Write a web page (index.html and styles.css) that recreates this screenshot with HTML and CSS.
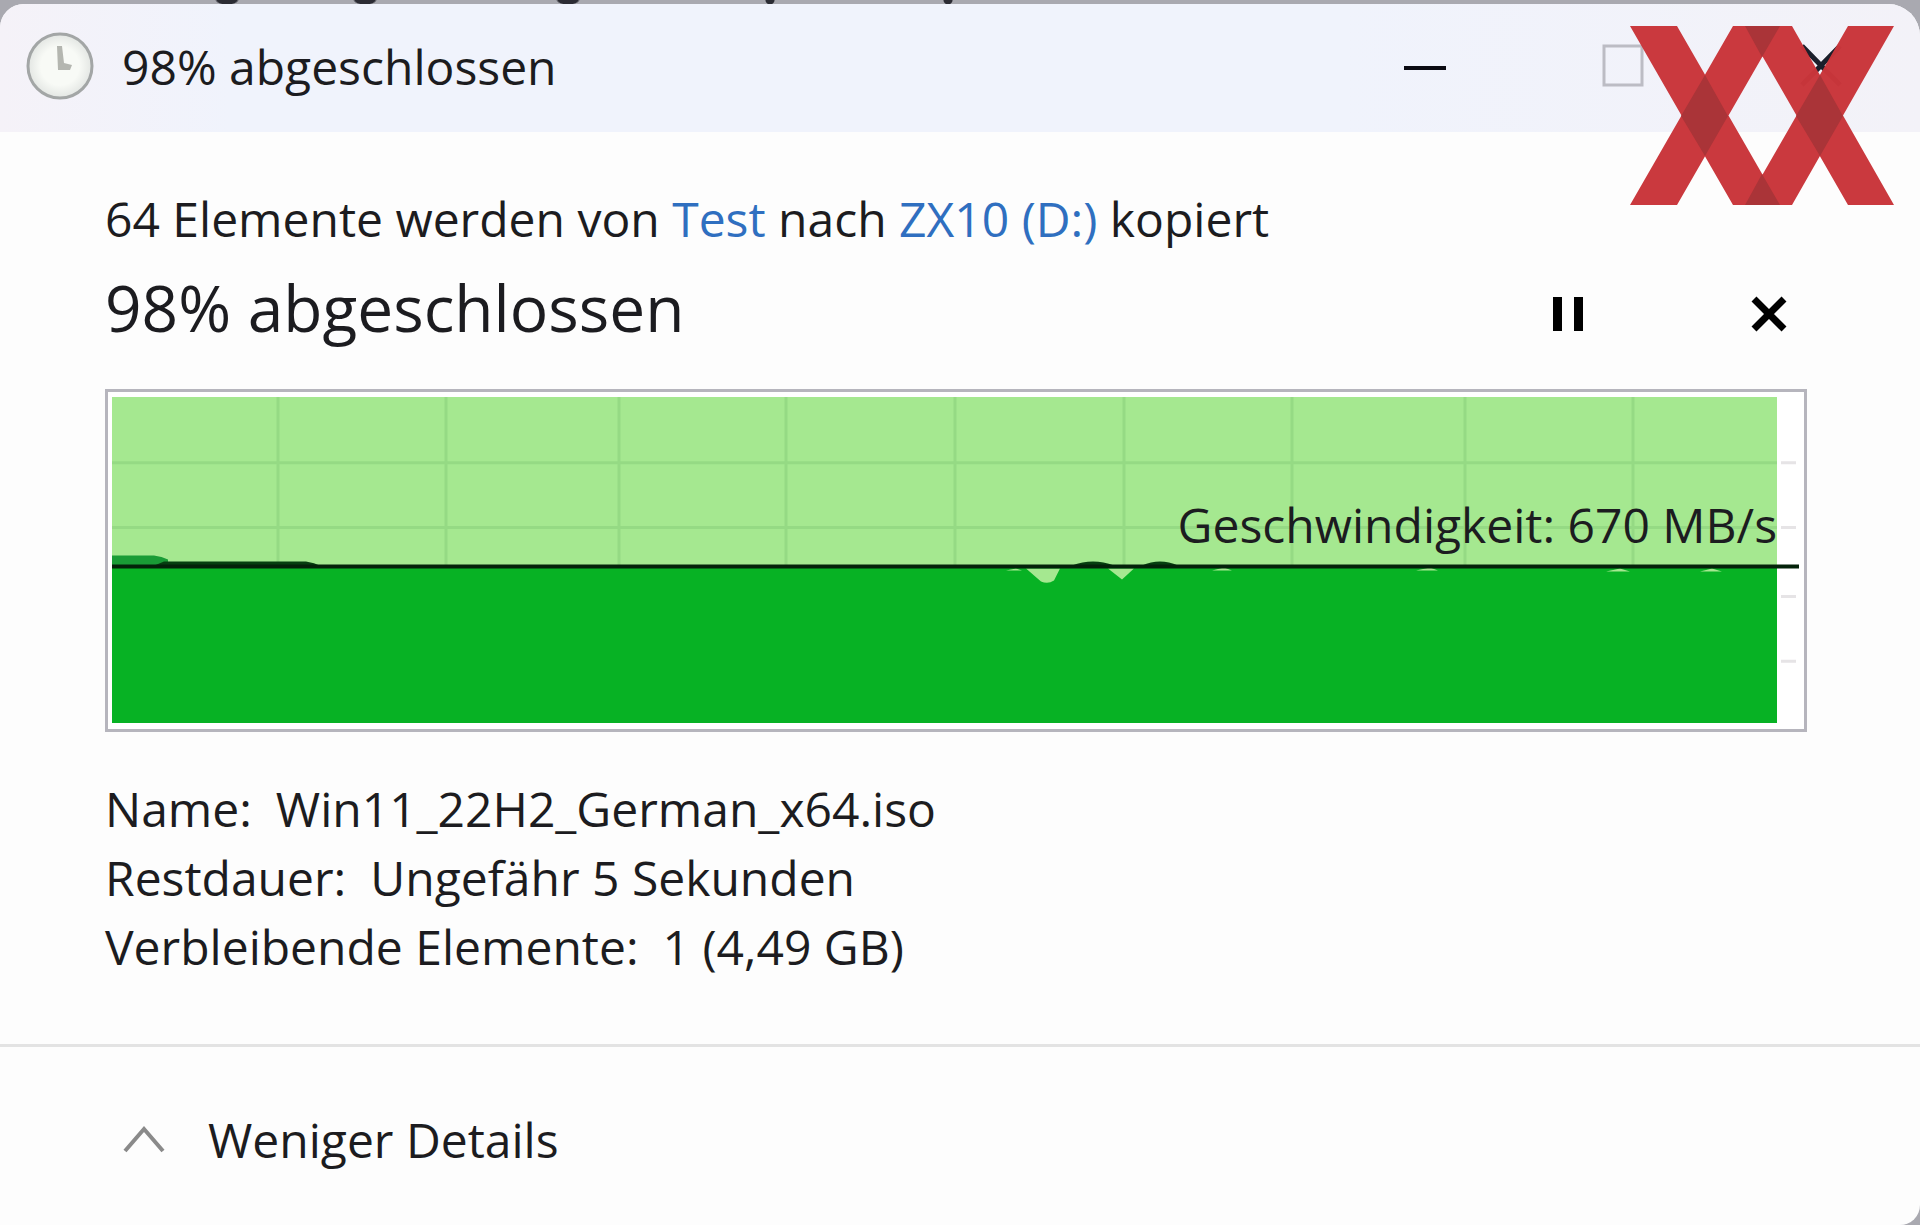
FILE: index.html
```html
<!DOCTYPE html>
<html lang="de">
  <head>
    <meta charset="UTF-8" />
    <title>98% abgeschlossen</title>
    <link rel="stylesheet" href="styles.css">
  </head>

  <body>
    <div class="window">
      <header class="titlebar">
        <svg class="titlebar__clock" viewBox="0 0 68 68" aria-hidden="true">
          <defs>
            <radialGradient id="face">
              <stop offset="0.6" stop-color="#f8faf6" />
              <stop offset="1" stop-color="#e3e6e3" />
            </radialGradient>
          </defs>
          <circle cx="34" cy="34" r="32" fill="url(#face)" stroke="#a3a6a6" stroke-width="3" />
          <path d="M31 14h5l2 17 8 2-2 5H32z" fill="#b4b6b0" />
        </svg>
        <h1 class="titlebar__title">98% abgeschlossen</h1>
        <div class="titlebar__controls">
          <button class="titlebar__btn" aria-label="Minimieren">
            <svg viewBox="0 0 44 44"><path d="M1 24h42" stroke="#0b0b12" stroke-width="4" /></svg>
          </button>
          <button class="titlebar__btn" aria-label="Maximieren" disabled>
            <svg viewBox="0 0 44 44"><path d="M3 2h38v39H3z" fill="none" stroke="#bcbcc4" stroke-width="3" /></svg>
          </button>
          <button class="titlebar__btn" aria-label="Schließen">
            <svg viewBox="0 0 44 44"><path d="M3 2l38 39M41 2L3 41" stroke="#1b1f2b" stroke-width="5" /></svg>
          </button>
        </div>
      </header>

      <main class="content">
        <p class="content__source">64 Elemente werden von <a href="#">Test</a> nach <a href="#">ZX10 (D:)</a> kopiert</p>

        <div class="progress">
          <h2 class="progress__title">98% abgeschlossen</h2>
          <div class="progress__actions">
            <button class="progress__btn" aria-label="Anhalten">
              <svg viewBox="0 0 36 36"><path d="M2 1h9v34H2zM23 1h9v34h-9z" fill="#000" /></svg>
            </button>
            <button class="progress__btn" aria-label="Abbrechen">
              <svg viewBox="0 0 36 36"><path d="M3 3l30 30M33 3L3 33" stroke="#000" stroke-width="7" /></svg>
            </button>
          </div>
        </div>

        <div class="chart">
          <svg class="chart__plot" viewBox="0 0 1696 338" preserveAspectRatio="none" aria-hidden="true">
            <!-- progress -->
            <path d="M4 5h1665v327H4z" fill="#a5e890" />
            <!-- grid -->
            <path d="M170 5v170M338 5v170M511 5v170M678 5v170M847 5v170M1016 5v170M1184 5v170M1357 5v170M1525 5v170M4 71h1665M4 136h1665" fill="none" stroke="#95da84" stroke-width="3" />
            <path d="M1673 71h15M1673 136h15M1673 205h15M1673 270h15" stroke="#e6e4e6" stroke-width="3" />
            <!-- speed -->
            <path d="M4 175h1665v157H4z" fill="#07b224" />
            <path d="M4 175v-11h42q8 1 14 4v7z" fill="#1a9c36" />
            <path d="M44 175l12-5h142q8 1 16 5zM964 174q21-8 42 0zM1034 174q18-8 36 0z" fill="#063f10" />
            <path d="M918 177h34l-6 12q-6 4-13 1zM1000 177h26l-12 11zM898 179l10-2 6 2zM1104 179l12-3 8 3zM1308 179l14-3 8 3zM1498 180l14-3 10 3zM1592 180l12-3 10 3z" fill="#a5e890" />
            <path d="M4 175h1687" stroke="#04220a" stroke-width="4" />
          </svg>
          <span class="chart__label">Geschwindigkeit: 670 MB/s</span>
        </div>

        <dl class="details">
          <div class="details__row"><dt>Name:</dt><dd>Win11_22H2_German_x64.iso</dd></div>
          <div class="details__row"><dt>Restdauer:</dt><dd>Ungefähr 5 Sekunden</dd></div>
          <div class="details__row"><dt>Verbleibende Elemente:</dt><dd>1 (4,49 GB)</dd></div>
        </dl>
      </main>

      <footer class="footer">
        <button class="footer__toggle">
          <svg viewBox="0 0 44 44" aria-hidden="true"><path d="M3 34L22 12l19 22" fill="none" stroke="#8a8a8a" stroke-width="4" /></svg>
          Weniger Details
        </button>
      </footer>
    </div>

    <svg class="logo" viewBox="0 0 264 179" role="img" aria-label="XX">
      <path d="M0 0h47l103 179h-47zM103 0h47L47 179H0zM115 0h47l102 179h-46zM218 0h46L162 179h-47z" fill="#ca363b" />
      <path d="M75 49l23 41-23 40-24-40zM190 49l23 41-23 40-24-40zM115 0h35l-18 31zM115 179h35l-18-31z" fill="#a93135" />
    </svg>
  </body>
</html>
```

FILE: styles.css
```css
* {
  box-sizing: border-box;
}

body {
  position: relative;
  min-height: 100vh;
  margin: 0;
  padding-top: 4px;
  display: flex;
  background-color: #a9a9b0;
  background-image: radial-gradient(ellipse 12px 5px at 227px 0, #2c2c34 80%, transparent),
    radial-gradient(ellipse 12px 5px at 365px 0, #2c2c34 80%, transparent),
    radial-gradient(ellipse 12px 5px at 568px 0, #2c2c34 80%, transparent),
    radial-gradient(ellipse 5px 5px at 770px 0, #2c2c34 80%, transparent),
    radial-gradient(ellipse 5px 5px at 948px 0, #2c2c34 80%, transparent);
  font-family: "Open Sans", "Noto Sans", sans-serif;
  font-size: 48px;
  line-height: 69px;
  color: #1c1c20;
}

h1,
h2,
p,
dl,
dd {
  margin: 0;
  font-weight: 400;
}

button {
  padding: 0;
  border: 0;
  background: none;
  font: inherit;
  color: inherit;
}

svg {
  display: block;
}

.window {
  flex: 1;
  display: flex;
  flex-direction: column;
  border-radius: 24px 32px 20px 0;
  background-color: #fdfdfd;
  overflow: hidden;
}

.titlebar {
  display: flex;
  align-items: center;
  height: 128px;
  padding: 0 77px 4px 26px;
  background: linear-gradient(90deg, #f5f2f8, #f0f3fc 12%, #f0f3fc 70%, #f3f2f8);
}

.titlebar__clock {
  width: 68px;
  height: 68px;
}

.titlebar__title {
  margin-left: 28px;
  font-size: 48px;
}

.titlebar__controls {
  display: flex;
  gap: 154px;
  margin-left: auto;
}

.titlebar__btn svg {
  width: 44px;
  height: 44px;
}

.content {
  flex: 1;
  padding: 52px 113px 0 105px;
}

.content__source a {
  color: #2f6fc0;
  text-decoration: none;
}

.progress {
  display: flex;
  justify-content: space-between;
  align-items: center;
  height: 108px;
}

.progress__title {
  font-size: 64px;
}

.progress__actions {
  display: flex;
  gap: 164px;
  padding: 14px 20px 0 0;
}

.progress__btn svg {
  width: 36px;
  height: 36px;
}

.chart {
  position: relative;
  margin-top: 28px;
  border: 3px solid #b6b5bd;
  background-color: #fff;
}

.chart__plot {
  width: 100%;
  height: 337px;
}

/* sits on top of the plot, just above the speed line */
.chart__label {
  position: absolute;
  right: 27px;
  top: 98px;
}

.details {
  margin-top: 42px;
}

.details__row {
  display: flex;
  gap: 24px;
}

.footer {
  height: 181px;
  padding: 6px 122px 0;
  display: flex;
  align-items: center;
  border-top: 3px solid #e3e3e3;
}

.footer__toggle {
  display: flex;
  align-items: center;
  gap: 42px;
}

.footer__toggle svg {
  width: 44px;
  height: 44px;
}

/* watermark over the window corner */
.logo {
  position: absolute;
  top: 26px;
  right: 26px;
  width: 264px;
  height: 179px;
  opacity: 0.98;
}
```
